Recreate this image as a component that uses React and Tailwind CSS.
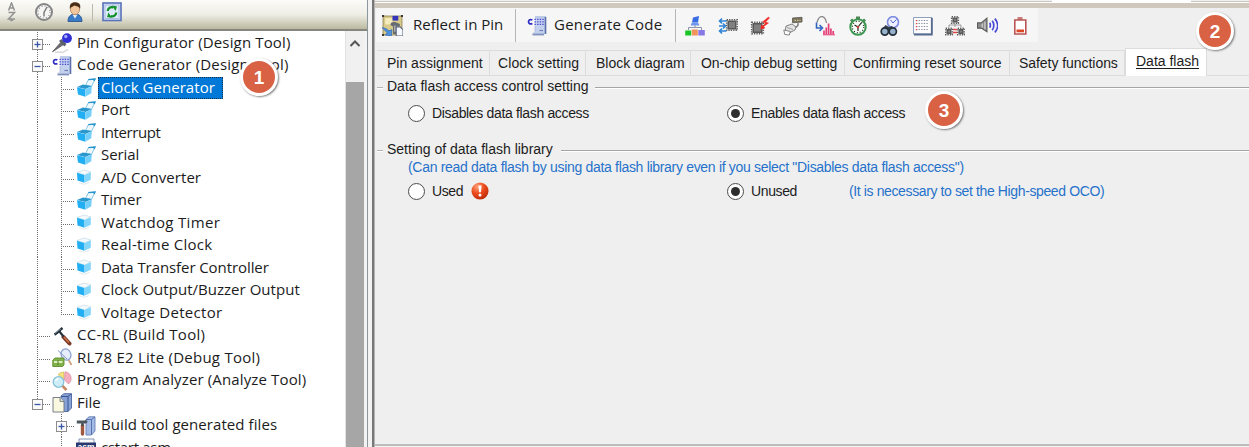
import React from "react";

/* ---------- icons: project tree ---------- */

const Svg = ({ children, size = 20, className = "" }) => (
  <svg width={size} height={size} viewBox="0 0 20 20" className={"block shrink-0 " + className}>
    {children}
  </svg>
);

const PinIcon = () => (
  <Svg>
    <path d="M.5 18.800 10 8l3 2.500Z" fill="#6d6d72" stroke="#55555c" strokeWidth=".8" />
    <path d="M3 19.300h8l5-3" stroke="#d9d9d9" strokeWidth="1.500" fill="none" />
    <path d="m7 8 5.500 5.500 2-2.500-5-5Z" fill="#5a5f6c" />
    <circle cx="15" cy="5.200" r="4.900" fill="#3030d6" />
    <circle cx="13.800" cy="3.500" r="1.700" fill="#a5a8ff" />
  </Svg>
);

const CodeIcon = () => (
  <Svg>
    <path d="M8 .8h11v16l-2 2H6.500l1.500-3Z" fill="#c3d1ee" />
    <path d="M8 .8h11" stroke="#9fb0d8" strokeWidth=".8" />
    <path d="M18.500 1v17" stroke="#5a70a8" strokeWidth="1.600" />
    <path d="M5.500 18.500H17" stroke="#8091ba" strokeWidth="1.800" />
    <path d="M8 10v5.500L5.500 18" stroke="#a8b6d6" strokeWidth=".8" fill="none" />
    <path d="M7.500 3.300h9.500M7.500 5.800h9.500M7.500 8.300h9.500" stroke="#4a4ad2" strokeWidth="1.300" strokeDasharray="1.400 1.200" />
    <path d="M5.300 4.200A2.200 2.200 0 1 0 5.300 7.300" stroke="#2e2ec6" strokeWidth="1.700" fill="none" />
    <path d="M12.500 14.500h3.500" stroke="#6f81ae" strokeWidth="1.200" />
  </Svg>
);

const OpenBoxIcon = () => (
  <Svg>
    <path d="m9.500 7.500 3-6 6.500-.5-3.500 7.500Z" fill="#eef8fc" stroke="#7cc2e2" strokeWidth=".9" />
    <path d="m12.300 1.600 6.700-.6-1 2" stroke="#2593cc" strokeWidth="1.400" fill="none" />
    <path d="m1 9 6-2.500 9 1.500-6.500 3Z" fill="#2a97cd" />
    <path d="m1 9.200 8.300 2v7.600L2 16.500Z" fill="#22aef3" />
    <path d="m9.300 11.200 6.500-3-.5 7-6 3.600Z" fill="#74d0fb" />
  </Svg>
);

const BoxIcon = () => (
  <Svg>
    <path d="m1 4.500 7-2.500 7 2-6.500 3Z" fill="#f4f9fb" stroke="#c4dde6" strokeWidth=".7" />
    <path d="m1 4.800 7.500 2.300v7.600L1.500 12.500Z" fill="#22aef3" />
    <path d="m8.500 7.100 6.300-2.800v7.500l-6.300 2.900Z" fill="#82d5fb" />
    <path d="M3 14.800 8.500 16.300l5-2" stroke="#e3eaed" fill="none" />
  </Svg>
);

const HammerIcon = () => (
  <Svg>
    <path d="m11.500 11 6 6.500" stroke="#7a3a25" strokeWidth="4" strokeLinecap="round" />
    <path d="m12 11 5 5.500" stroke="#c9714d" strokeWidth="1.600" />
    <path d="m7 5 4.500 5.500" stroke="#26333c" strokeWidth="2.200" />
    <path d="M2.500 8.500C5 7.500 7 4.500 10.500 2" stroke="#1e2c36" strokeWidth="2.600" fill="none" />
    <path d="M3 7.300 9 2.800" stroke="#91a4ae" strokeWidth=".8" />
  </Svg>
);

const DebugIcon = () => (
  <Svg>
    <path d="m16 11 3.500 6" stroke="#d3a27c" strokeWidth="1.800" />
    <ellipse cx="14" cy="6.500" rx="4.800" ry="5.800" fill="#e6edfb" stroke="#8ea2d3" strokeWidth="1.300" transform="rotate(-20 14 6.500)" />
    <path d="m6 2.500 9 8.500" stroke="#8095c8" strokeWidth="1" />
    <path d="M.8 12 3 10h9v7l-1.500 1.500H.8Z" fill="#80b248" stroke="#5d8a32" strokeWidth=".9" />
    <path d="M2 14h8.500" stroke="#e4f3cc" strokeWidth="1.800" />
    <path d="M6 12v5" stroke="#547f2a" />
  </Svg>
);

const AnalyzerIcon = () => (
  <Svg>
    <path d="M12 8.500V1A8 8 0 0 0 6 3.500Z" fill="#f4e279" stroke="#cdb45a" strokeWidth=".7" />
    <path d="M12.500 9 13 .8A6.800 6.800 0 0 1 16.500 13Z" fill="#f5aebd" stroke="#d98ea0" strokeWidth=".7" />
    <path d="m10 14.500 4.500 4.500" stroke="#c98560" strokeWidth="2.500" />
    <circle cx="6.500" cy="11" r="5.300" fill="#cdeef8" stroke="#86c2db" strokeWidth="1.300" />
    <path d="M3.500 10a3.500 3.500 0 0 1 3-2.300" stroke="#fff" strokeWidth="1.400" fill="none" />
  </Svg>
);

const FilesIcon = () => (
  <Svg>
    <path d="m9 3 3-2.300h7.500V15L16 18.500H9Z" fill="#86a2d6" stroke="#4d669d" strokeWidth=".9" />
    <path d="M16 3.500v15M9 3.500h7l3.300-2.500" stroke="#3a5590" strokeWidth="1" fill="none" />
    <path d="M1 4.500h7l4 4V19H1Z" fill="#fbf8e0" stroke="#666f80" strokeWidth=".9" />
    <path d="M8 4.500v4h4" fill="#d8dcbf" stroke="#666f80" strokeWidth=".8" />
  </Svg>
);

const GeneratedIcon = () => (
  <Svg>
    <path d="m10 3.500 3-2.700h6V15l-3.500 4H10Z" fill="#a4bbe5" stroke="#6780b5" strokeWidth=".9" />
    <path d="M15.500 3.500V19M10 3.500h5.500l3.500-2.700" stroke="#5a73ac" fill="none" />
    <path d="M6.500 9.500v8.500" stroke="#a0583e" strokeWidth="3.400" strokeLinecap="round" />
    <path d="M6.500 5v5" stroke="#444f56" strokeWidth="2.400" />
    <path d="M.8 6h8.700l1.300-1.300" stroke="#4b575c" strokeWidth="2.800" fill="none" />
  </Svg>
);

const AsmIcon = () => (
  <Svg>
    <path d="M3 1h15v17H3Z" fill="#fff" stroke="#8492b3" />
    <rect x="0" y="4.500" width="20" height="9" fill="#28396f" />
    <text x="10" y="12" textAnchor="middle" fontSize="8.500" fontWeight="bold" fontFamily="Liberation Sans, sans-serif" fill="#fff">asm</text>
  </Svg>
);

/* ---------- icons: left toolbar ---------- */

const SortIcon = () => (
  <Svg>
    <g fill="none" stroke="#929292" strokeWidth="1.500">
      <path d="M7.500 8.500 10.500 1l3 7.500M8.500 6h4" />
      <path d="M7.500 10.500h6l-6 6.500h6.500" />
    </g>
    <path d="m7.500 17.500 3 2 3-2" fill="#929292" />
  </Svg>
);

const GrayClockIcon = () => (
  <Svg>
    <circle cx="10" cy="10" r="8" fill="#f5f5f3" stroke="#858585" strokeWidth="2" />
    <circle cx="10" cy="10" r="6" fill="none" stroke="#8f8f8f" strokeWidth="1.200" strokeDasharray="1 2.140" />
    <path d="M13 5 10 10.500v4" stroke="#777" strokeWidth="1.400" fill="none" />
  </Svg>
);

const UserIcon = () => (
  <Svg>
    <path d="M3 19.500c0-5.500 3-7.500 7-7.500s7 2 7 7.500Z" fill="#3a7bc8" stroke="#1f4c8b" strokeWidth=".8" />
    <path d="m7.500 12.500 2.500 4 2.500-4Z" fill="#e9f3ff" />
    <ellipse cx="10" cy="7" rx="4.600" ry="5.700" fill="#f3c79d" stroke="#9a6a3c" strokeWidth=".6" />
    <path d="M5 7C4 2 7 0 10.500.3 15 .3 16 4 15 7c-1-3-4-2.500-5.500-3.500C8 5 6 4.500 5 7Z" fill="#4b2e17" />
  </Svg>
);

const RefreshIcon = () => (
  <Svg>
    <rect x="1" y="1" width="18" height="17.500" fill="#dce9f8" stroke="#5870b8" strokeWidth="1.600" />
    <rect x="3" y="3" width="14" height="13.500" fill="none" stroke="#a8bce4" />
    <path d="M5.800 9c0-3 3-4.500 5.500-3.500" fill="none" stroke="#149028" strokeWidth="2.200" />
    <path d="m10 3.500 5 1-1.500 4.500Z" fill="#149028" />
    <path d="M14.200 10.500c0 3-3 4.500-5.500 3.500" fill="none" stroke="#149028" strokeWidth="2.200" />
    <path d="m10 16-5-1 1.500-4.500Z" fill="#149028" />
  </Svg>
);

/* ---------- icons: right toolbar ---------- */

const ReflectIcon = () => (
  <Svg size={21}>
    <path d="M1 1h18v18H1Z" fill="#d9ca8a" stroke="#8d8150" strokeWidth=".8" />
    <path d="M3 3h7v6H3Z" fill="#f5ecbd" />
    <path d="M10 .8h5.500v4.500H10Z" fill="#3434bd" />
    <path d="M8 9.500c0-2 2-3.500 5-2.500l4 1.500v2.500h-3v7h-3.500v-7Z" fill="#666c72" />
    <path d="M12.300 10v6" stroke="#c9c9c9" strokeWidth="1.200" />
    <path d="M13.500 11.500h4l2.500 2.500v6h-6.500Z" fill="#f6f9ff" stroke="#56607c" />
    <path d="m0 12 4 1 2.500 2 3-1-.5 6-6-1 2-2Z" fill="#4c92dc" stroke="#3a6db2" strokeWidth=".7" />
    <path d="M0 0h2v2H0zM18 0h2v2h-2zM0 18h2v2H0z" fill="#3c3a30" />
  </Svg>
);

const TreeIcon = () => (
  <Svg>
    <path d="M10 9v3M3.500 14v-2.500h13V14" stroke="#8b95a8" fill="none" />
    <path d="m8 1.500 6-1.500-1 6.500H7Z" fill="#386ce4" />
    <path d="M7 6.500h6l1.500 3H5.500Z" fill="#7197ea" />
    <path d="M.2 14.500h6v5h-6Z" fill="#1ac526" />
    <path d="M6.800 13.500h6v6h-6Z" fill="#f0945c" />
    <path d="M13.300 14h6.500v5.500h-6.500Z" fill="#8878e6" />
  </Svg>
);

const Chip = ({ x, y, s }) => (
  <g>
    <rect x={x - 0.8} y={y - 0.8} width={s + 1.6} height={s + 1.6} fill="none" stroke="#5c5c5c" strokeWidth="1.600" strokeDasharray="1.300 1.100" />
    <rect x={x} y={y} width={s} height={s} fill="#585858" />
    <rect x={x + 1.5} y={y + 1.5} width={s - 3} height={s - 3} fill="#808080" />
  </g>
);

const PortIcon = () => (
  <Svg>
    <Chip x={9.5} y={4.5} s={9} />
    <path d="M1.500 5H8.500M4 2.500 1.500 5 4 7.500M1 10h6M5 7.500 7.500 10 5 12.500M1.500 15H8.500M4 12.500 1.500 15 4 17.500" stroke="#2f84d6" strokeWidth="1.600" fill="none" />
  </Svg>
);

const InterruptIcon = () => (
  <Svg>
    <Chip x={2.5} y={7} s={10} />
    <path d="M18.500 1 12.500 6l3 .8-4 5.200 7-5-3-1 4-4Z" fill="#ee2a25" stroke="#ee2a25" strokeWidth=".5" />
    <path d="m10.500 13.500.8-5 4 3.500Z" fill="#ee2a25" />
  </Svg>
);

const SerialIcon = () => (
  <Svg>
    <path d="M9.500 2 19 1.300V6L9.500 6.800Z" fill="#77715f" stroke="#5d594d" strokeWidth=".8" />
    <path d="M11.500 4.300h6" stroke="#d9cb90" strokeWidth="1.300" strokeDasharray="1.500 1" />
    <path d="M15 7c1 4-2 3-4 6" stroke="#777" strokeWidth="1.400" fill="none" />
    <path d="m3 10 6-2 4 3-1 3-5 2.500-5-.5Z" fill="#e3e3e3" stroke="#777" strokeWidth=".9" />
    <path d="m.8 14 6.500 1.500-1 3.500-4.500-.5Z" fill="#fff" stroke="#777" strokeWidth=".9" />
    <path d="m4 11.500 6 2" stroke="#8a8a8a" strokeWidth=".8" />
  </Svg>
);

const AdcIcon = () => (
  <Svg>
    <path d="M2 6.500C4-1.500 10-1.500 11.500 7" fill="none" stroke="#8a8a8a" strokeWidth="1.300" />
    <path d="M1.500 6.500V12h4.500M4.500 9l3 3-3 3" fill="none" stroke="#3164bf" strokeWidth="1.600" />
    <path d="M9 18.500v-4M11.300 18.500v-7M13.600 18.500V7.500M15.900 18.500v-6M18.200 18.500v-3.500" stroke="#e53d77" strokeWidth="1.700" />
    <path d="M8 18.800h12" stroke="#e53d77" />
  </Svg>
);

const GreenClockIcon = () => (
  <Svg>
    <path d="M8 .5h4V3H8ZM2 4.500l2-2 2 2-2 2ZM14 4.500l2-2 2 2-2 2Z" fill="#4b8557" />
    <circle cx="10" cy="11" r="7.700" fill="#f8fff8" stroke="#3c9650" strokeWidth="2" />
    <circle cx="10" cy="11" r="5.700" fill="none" stroke="#222" strokeWidth="1.200" strokeDasharray="1 1.980" />
    <path d="m6.500 9 3.500 2 3.500-4.500M10 11v4" stroke="#222" fill="none" strokeWidth="1.200" />
    <circle cx="10" cy="11" r="1.200" fill="#cf3c35" />
  </Svg>
);

const WatchdogIcon = () => (
  <Svg>
    <circle cx="13" cy="6.200" r="5.500" fill="#edf0ff" stroke="#7d8be0" strokeWidth="1.600" />
    <path d="m10.500 4 2.500 3 3.500-3.500" stroke="#5364c7" fill="none" />
    <path d="m3 12 2.500-3 3.500 2 3-1 3 4v3H2Z" fill="#36424d" />
    <circle cx="4.800" cy="15.500" r="3.600" fill="#96b2cc" stroke="#242f3a" strokeWidth="1.700" />
    <circle cx="12.800" cy="15.500" r="3.600" fill="#96b2cc" stroke="#242f3a" strokeWidth="1.700" />
  </Svg>
);

const CalendarIcon = () => (
  <Svg>
    <path d="M.5 1.500h18.500v16.500H.5Z" fill="#fdfdfd" stroke="#8fa0bc" />
    <path d="M18.800 2v16.500H1" stroke="#566b90" strokeWidth="1.800" fill="none" />
    <path d="M3 4.500h13M3 7.500h13M3 10.500h13M3 13.500h13" stroke="#889" strokeWidth="1.200" strokeDasharray="1.300 1.300" />
    <path d="M3.500 4v11" stroke="#e34950" strokeWidth="1.400" strokeDasharray="1.300 1.700" />
  </Svg>
);

const DtcIcon = () => (
  <Svg>
    <Chip x={7.5} y={1.5} s={5} />
    <Chip x={1.5} y={13} s={5} />
    <Chip x={13.5} y={13} s={5} />
    <path d="M4 11V9h12v2M10 8v3" stroke="#999" fill="none" />
    <path d="M8 13.500h4M8 16.500h4" stroke="#df4747" strokeWidth="1.400" />
  </Svg>
);

const SpeakerIcon = () => (
  <Svg size={21}>
    <path d="M.5 7.500h3.500L9.500 3v13L4 12.500H.5Z" fill="#8c8c8c" stroke="#5c5c5c" />
    <path d="M5 8v4M7.500 6.500v7" stroke="#cfcfcf" strokeWidth="1.200" />
    <path d="M12 7.500c1 1 1 3.500 0 4.500M14.500 5.500c2 2.500 2 6.500 0 9M17 3.500c3.500 4 3.500 9 0 13" stroke="#4747d8" strokeWidth="1.600" fill="none" />
  </Svg>
);

const BatteryIcon = () => (
  <Svg>
    <path d="M7.500 1h5v3h-5Z" fill="#c87b7b" />
    <path d="M4.800 4h11v14h-11Z" fill="#fff" stroke="#b95555" strokeWidth="1.600" />
    <path d="M6.500 13.500H14v2.800H6.500Z" fill="#de4628" />
  </Svg>
);

const WarningIcon = () => (
  <Svg size={18}>
    <defs>
      <radialGradient id="warn" cx=".35" cy=".25" r=".8">
        <stop offset="0" stopColor="#ffa27a" />
        <stop offset=".5" stopColor="#ed4a1c" />
        <stop offset="1" stopColor="#b92a08" />
      </radialGradient>
    </defs>
    <circle cx="10" cy="10" r="9.500" fill="url(#warn)" />
    <path d="M8.200 4h3.600l-.8 7.500H9Z" fill="#fff" />
    <circle cx="10" cy="14.500" r="1.700" fill="#fff" />
  </Svg>
);

/* ---------- tree ---------- */

const rows = [
  { level: 0, label: "Pin Configurator (Design Tool)", icon: PinIcon, box: "+", track: "tracking-[0.15px]" },
  { level: 0, label: "Code Generator (Design Tool)", icon: CodeIcon, box: "-", track: "tracking-[0.19px]" },
  { level: 1, label: "Clock Generator", icon: OpenBoxIcon, selected: true, trunk: true, track: "tracking-[0.05px]" },
  { level: 1, label: "Port", icon: OpenBoxIcon, trunk: true, track: "tracking-[-0.2px]" },
  { level: 1, label: "Interrupt", icon: OpenBoxIcon, trunk: true, track: "tracking-[-0.4px]" },
  { level: 1, label: "Serial", icon: OpenBoxIcon, trunk: true, track: "tracking-[-0.1px]" },
  { level: 1, label: "A/D Converter", icon: BoxIcon, trunk: true, track: "tracking-[0.05px]" },
  { level: 1, label: "Timer", icon: OpenBoxIcon, trunk: true, track: "tracking-[0.02px]" },
  { level: 1, label: "Watchdog Timer", icon: BoxIcon, trunk: true, track: "tracking-[0.32px]" },
  { level: 1, label: "Real-time Clock", icon: BoxIcon, trunk: true, track: "tracking-[0.28px]" },
  { level: 1, label: "Data Transfer Controller", icon: BoxIcon, trunk: true, track: "tracking-[-0.08px]" },
  { level: 1, label: "Clock Output/Buzzer Output", icon: BoxIcon, trunk: true, track: "tracking-[0.03px]" },
  { level: 1, label: "Voltage Detector", icon: BoxIcon, trunk: true, last: true, track: "tracking-[0.3px]" },
  { level: 0, label: "CC-RL (Build Tool)", icon: HammerIcon, track: "tracking-[0.28px]" },
  { level: 0, label: "RL78 E2 Lite (Debug Tool)", icon: DebugIcon, track: "tracking-[0.25px]" },
  { level: 0, label: "Program Analyzer (Analyze Tool)", icon: AnalyzerIcon, track: "tracking-[0.14px]" },
  { level: 0, label: "File", icon: FilesIcon, box: "-", last: true, track: "tracking-[0px]" },
  { level: 1, label: "Build tool generated files", icon: GeneratedIcon, box: "+", track: "tracking-[0.07px]" },
  { level: 1, label: "cstart.asm", icon: AsmIcon, track: "tracking-[-0.3px]" },
];

function Guides({ row, h }) {
  const w = row.level ? 76 : 52;
  const x = row.level ? 61.5 : 37.5;
  const y = 12.5;
  return (
    <svg width={w} height={h} className="block shrink-0">
      <g stroke="#6f6f6f" strokeWidth="1" strokeDasharray="1 1">
        {row.trunk && <path d={`M37.5 0V${h}`} />}
        <path d={`M${x} 0V${row.last ? 13 : h}`} />
        <path d={`M${x + 1.5} ${y}H${w - 1}`} />
      </g>
      {row.box && (
        <g>
          <rect x={x - 5} y={y - 5} width="10" height="10" fill="#fafafa" stroke="#8d8d8d" />
          <path d={`M${x - 3} ${y}h6`} stroke="#3a58a6" strokeWidth="1.300" />
          {row.box === "+" && <path d={`M${x} ${y - 3}v6`} stroke="#3a58a6" strokeWidth="1.300" />}
        </g>
      )}
    </svg>
  );
}

function TreeRow({ row, odd }) {
  const Icon = row.icon;
  return (
    <div className={"flex shrink-0 items-center " + (odd ? "h-[23px]" : "h-[22px]")}>
      <Guides row={row} h={odd ? 23 : 22} />
      <Icon />
      <span
        className={
          "ml-[2px] flex h-[22px] items-center whitespace-nowrap pb-[2px] pl-[3px] " +
          row.track +
          (row.selected ? " w-[125px] bg-[#0078d7] text-white outline-1 -outline-offset-1 outline-dotted outline-[#17324d]" : "")
        }
      >
        {row.label}
      </span>
    </div>
  );
}

/* ---------- right pane ---------- */

const tabs = [
  ["Pin assignment", "ml-[2px] w-[113px] pl-[10px]"],
  ["Clock setting", "w-[96px] pl-[8px] tracking-[0.08px]"],
  ["Block diagram", "w-[105px] pl-[10px]"],
  ["On-chip debug setting", "w-[154px] pl-[10px] tracking-[-0.03px]"],
  ["Confirming reset source", "w-[165px] pl-[8px]"],
  ["Safety functions", "w-[115px] pl-[9px] tracking-[-0.05px]"],
];

const tools = [TreeIcon, PortIcon, InterruptIcon, SerialIcon, AdcIcon, GreenClockIcon, WatchdogIcon, CalendarIcon, DtcIcon, SpeakerIcon, BatteryIcon];

const Radio = ({ checked }) => (
  <span className="flex size-[17px] shrink-0 items-center justify-center rounded-full border-[1.5px] border-[#4c4c4c] bg-white">
    {checked && <span className="size-[9px] rounded-full bg-[#2e2e2e]" />}
  </span>
);

const GroupTitle = ({ children, gap }) => (
  <div className="flex h-[18px] items-center whitespace-nowrap pl-[2px]">
    <span className="mt-[3px] h-[2px] w-[6px] border-b border-white bg-[#b4b4b4]" />
    <span className="ml-[4px]">{children}</span>
    <span className={"mt-[3px] h-[2px] flex-1 border-b border-white bg-[#a5a5a5] " + gap} />
  </div>
);

const Badge = ({ n, className }) => (
  <div
    className={
      "absolute flex size-[38px] items-center justify-center rounded-full border-[3px] border-white bg-[#d96244] font-['Liberation_Sans',sans-serif] text-[19px] font-bold text-white shadow-[1px_1px_2px_rgba(0,0,0,0.5)] " +
      className
    }
  >
    {n}
  </div>
);

export default function App() {
  return (
    <div className="relative flex h-[447px] w-[1249px] overflow-hidden bg-[#efefef] font-['Liberation_Sans',Arial,sans-serif] text-[14px] leading-none text-[#1c1c1c]">
      <aside className="flex h-full w-[368px] shrink-0 flex-col border-r border-[#8c969e] bg-[#f3f3f3]">
        <div className="flex h-[29px] shrink-0 items-start bg-linear-to-b from-[#fbfbf8] via-[#efeee6] to-[#bbb99f] pl-px pt-[2px]">
          <SortIcon />
          <div className="ml-[13px]">
            <GrayClockIcon />
          </div>
          <div className="ml-[11px]">
            <UserIcon />
          </div>
          <div className="ml-[7px] mt-[2px] h-[17px] w-px bg-[#b9b8aa]" />
          <div className="ml-[9px]">
            <RefreshIcon />
          </div>
        </div>
        <div className="h-[2px] shrink-0 bg-[#85877e]" />
        <div className="flex min-h-0 flex-1">
          <div className="flex w-[345px] flex-col overflow-hidden bg-white pt-px font-['Open_Sans','Noto_Sans',sans-serif] text-[15px]">
            {rows.map((row, i) => (
              <TreeRow key={row.label} row={row} odd={i % 2 === 1} />
            ))}
          </div>
          <div className="flex w-[19px] shrink-0 flex-col border-l border-[#e2e2e2] bg-[#f0f0f0]">
            <div className="flex h-[51px] justify-center pt-[8px]">
              <svg width="12" height="9" viewBox="0 0 12 9">
                <path d="m1.500 7 4.500-4.500L10.500 7" fill="none" stroke="#555" strokeWidth="2" />
              </svg>
            </div>
            <div className="flex-1 bg-[#a6a6a6]" />
          </div>
        </div>
      </aside>
      <div className="w-[4px] shrink-0 bg-[#f2f2f2]" />
      <div className="w-[3px] shrink-0 border-r border-[#b5b5b5] bg-[#777]" />

      <main className="flex min-w-0 flex-1 flex-col">
        <div className="flex h-[2px] shrink-0">
          <div className="w-[677px] border-b border-[#c9c6c0]" />
          <div className="w-[139px] bg-white" />
          <div className="flex-1 border-b border-[#c9c6c0]" />
        </div>
        <div className="h-px shrink-0 bg-white" />
        <div className="h-[5px] shrink-0 bg-[#d0c8bd]" />
        <div className="ml-px flex h-[34px] w-[662px] shrink-0 items-center bg-[#f6f6f6] pt-px font-['Open_Sans','Noto_Sans',sans-serif] text-[15px]">
          <div className="flex w-[139px] items-center pl-[6px]">
            <ReflectIcon />
            <span className="ml-[10px] whitespace-nowrap pb-[3px]">Reflect in Pin</span>
          </div>
          <div className="h-[33px] w-px shrink-0 bg-[#b6b6b6]" />
          <div className="flex w-[159px] items-center pl-[11px]">
            <CodeIcon />
            <span className="ml-[7px] whitespace-nowrap pb-[3px] tracking-[0.25px]">Generate Code</span>
          </div>
          <div className="h-[33px] w-px shrink-0 bg-[#b6b6b6]" />
          <div className="ml-[3px] flex">
            {tools.map((Tool, i) => (
              <span key={i} className="flex w-[32.5px] items-center justify-center">
                <Tool />
              </span>
            ))}
          </div>
        </div>

        <div className="mt-[6px] flex h-[28px] shrink-0 items-end">
          {tabs.map(([label, cls]) => (
            <div key={label} className={"flex h-[26px] shrink-0 items-center whitespace-nowrap border-y border-r border-[#dcdcdc] " + cls}>
              {label}
            </div>
          ))}
          <div className="flex h-[28px] w-[82px] items-center border-x border-t border-[#dcdcdc] bg-white pb-[3px] pl-[10px]">
            <span className="whitespace-nowrap border-b border-[#1c1c1c]">Data flash</span>
          </div>
          <div className="h-px flex-1 bg-[#dcdcdc]" />
        </div>

        <section className="flex min-h-0 flex-1 flex-col pt-px">
          <GroupTitle gap="ml-[6px]">Data flash access control setting</GroupTitle>
          <div className="mt-[9px] flex h-[18px] items-center pl-[33px] tracking-[-0.34px]">
            <Radio />
            <span className="ml-[7px] w-[295px]">Disables data flash access</span>
            <Radio checked />
            <span className="ml-[7px]">Enables data flash access</span>
          </div>
          <div className="mt-[18px]">
            <GroupTitle gap="ml-[8px]">Setting of data flash library</GroupTitle>
          </div>
          <div className="flex h-[17px] items-center pl-[33px] tracking-[-0.31px] text-[#2672cb]">
            (Can read data flash by using data flash library even if you select "Disables data flash access")
          </div>
          <div className="mt-[7px] flex h-[18px] items-center pl-[33px] tracking-[-0.38px]">
            <Radio />
            <span className="ml-[7px] w-[39px]">Used</span>
            <div className="w-[256px]">
              <WarningIcon />
            </div>
            <Radio checked />
            <span className="ml-[7px] w-[98px]">Unused</span>
            <span className="text-[#2672cb]">(It is necessary to set the High-speed OCO)</span>
          </div>
          <div className="mt-auto h-[2px] bg-[#bcbcbc]" />
          <div className="h-px bg-[#f3f3f3]" />
        </section>
      </main>

      <Badge n="1" className="left-[240px] top-[58px]" />
      <Badge n="2" className="left-[1196px] top-[12px]" />
      <Badge n="3" className="left-[925px] top-[91px]" />
    </div>
  );
}
